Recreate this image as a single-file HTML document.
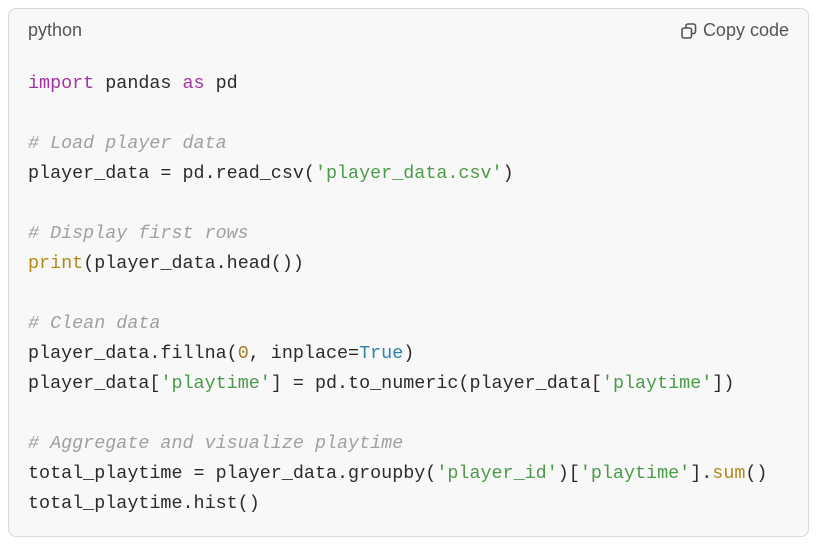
<!DOCTYPE html>
<html><head><style>
body{margin:0;background:#fff;width:818px;height:549px;overflow:hidden}
.box{position:absolute;left:8px;top:8px;width:799px;height:527px;border:1px solid #d9d9d9;border-radius:8px;background:#f9f8f8}
.hdr{position:absolute;left:19px;top:11px;font:18px "Liberation Sans",sans-serif;color:#555}
.copy{position:absolute;right:19px;top:11px;font:18px "Liberation Sans",sans-serif;color:#555;display:flex;align-items:center;gap:6px}
pre{position:absolute;left:19px;top:60px;margin:0;font:18.4px/30px "Liberation Mono",monospace;color:#2b2b2b}
.k{color:#a233a0}.c{color:#a0a0a0;font-style:italic}.s{color:#4a9b48}.n{color:#a7791f}.b{color:#2b85a8}.f{color:#b28a1a}
</style></head><body>
<div class="box">
<div class="hdr">python</div>
<div class="copy"><svg width="16" height="16" viewBox="0 0 16 16" fill="none" stroke="#555" stroke-width="1.6"><rect x="1" y="5" width="9.5" height="10" rx="2"/><path d="M5 5V3a2 2 0 0 1 2-2h5.5a2 2 0 0 1 2 2v5.5a2 2 0 0 1-2 2h-2"/></svg>Copy code</div>
<pre><span class="k">import</span> pandas <span class="k">as</span> pd

<span class="c"># Load player data</span>
player_data = pd.read_csv(<span class="s">'player_data.csv'</span>)

<span class="c"># Display first rows</span>
<span class="f">print</span>(player_data.head())

<span class="c"># Clean data</span>
player_data.fillna(<span class="n">0</span>, inplace=<span class="b">True</span>)
player_data[<span class="s">'playtime'</span>] = pd.to_numeric(player_data[<span class="s">'playtime'</span>])

<span class="c"># Aggregate and visualize playtime</span>
total_playtime = player_data.groupby(<span class="s">'player_id'</span>)[<span class="s">'playtime'</span>].<span class="f">sum</span>()
total_playtime.hist()</pre>
</div>
</body></html>
